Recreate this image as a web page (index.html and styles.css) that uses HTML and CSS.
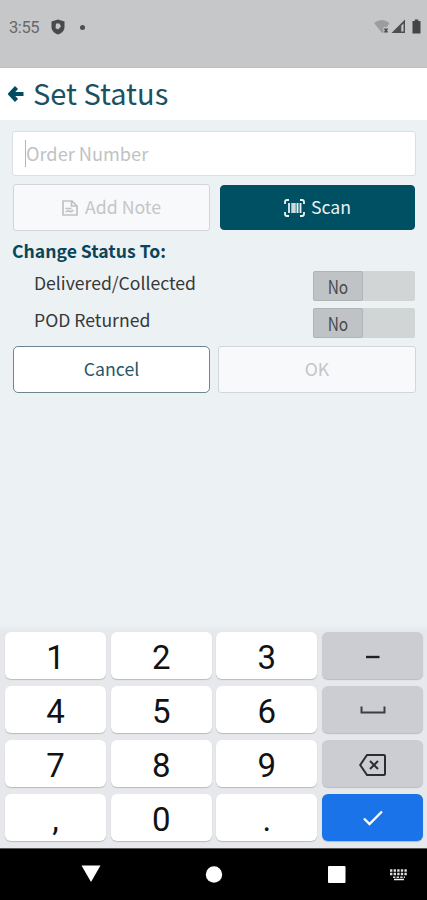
FILE: index.html
```html
<!DOCTYPE html>
<html lang="en">
<head>
<meta charset="utf-8">
<title>Set Status</title>
<link rel="stylesheet" href="styles.css">
</head>
<body>
<div class="statusbar">
  <span class="clock">3:55</span>
  <svg class="shield" width="14" height="16" viewBox="0 0 14 16"><path d="M7 .5 13.500 2.500V8c0 3.500-2.500 6-6.500 7.500C3 14 .5 11.500.5 8V2.500z" fill="#484a4c"/><path d="M5 4.500h3.500L10 7.500 7 10.500 4.500 9z" fill="#c5c7c9"/></svg>
  <span class="dot"></span>
  <span class="spacer"></span>
  <svg width="50" height="16" viewBox="0 0 50 16"><path d="M0 4Q8-2 15.500 4L13 8H9.500v5.500L8 14z" fill="#9b9d9f"/><path d="m10.500 9.500 3 4m0-4-3 4" stroke="#4c4e50" stroke-width="1.500"/><path d="M17.500 14 31 .5V14z" fill="#4c4e50"/><path d="M27.300 6.700 29.500 4.500v8h-2.200z" fill="#c5c7c9"/><path d="M38.500 2h2.300V.5h3.400V2h2.300v12.500h-8z" fill="#424446"/></svg>
</div>
<header class="header">
  <svg width="16" height="18" viewBox="0 0 16 18"><path d="M8.500 2.500 2.500 9l6 6.500M2.500 9H15.500" fill="none" stroke="#004d61" stroke-width="4.200"/></svg>
  <h1>Set Status</h1>
</header>
<main class="content">
  <div class="field"><span class="caret"></span><span class="placeholder">Order Number</span></div>
  <div class="buttons">
    <button class="btn disabled"><svg width="16" height="16" viewBox="0 0 16 16" fill="none" stroke="#bfc1c2" stroke-width="1.700"><path d="M1 1h9l5 5v9H1zM9.500 1v5H15M3.500 8.500h6M3.500 11.800l3-1 2 1 3-1.500"/></svg><span>Add Note</span></button>
    <button class="btn primary"><svg width="21" height="18" viewBox="0 0 21 18" fill="none" stroke="#e9f1f3" stroke-width="1.800"><path d="M5 1H3Q1 1 1 3v2M16 1h2q2 0 2 2v2M5 17H3q-2 0-2-2v-2M16 17h2q2 0 2-2v-2"/><path d="M5 4v10M16.500 4v10" stroke-width="1.800"/><path d="M9.500 4v10" stroke-width="4.500" stroke="#c9dade"/><path d="M13.500 4v10" stroke-width="2"/></svg><span>Scan</span></button>
  </div>
  <h2>Change Status To:</h2>
  <div class="option"><span class="label">Delivered/Collected</span><span class="toggle"><span class="knob"><span>No</span></span></span></div>
  <div class="option"><span class="label">POD Returned</span><span class="toggle"><span class="knob"><span>No</span></span></span></div>
  <div class="buttons actions">
    <button class="btn outline"><span>Cancel</span></button>
    <button class="btn disabled ok"><span>OK</span></button>
  </div>
</main>
<section class="keyboard">
  <div class="key">1</div><div class="key">2</div><div class="key">3</div>
  <div class="key fn"><svg width="28" height="24" viewBox="0 0 28 24"><path d="M7 12h13.500" stroke="#202124" stroke-width="2.400"/></svg></div>
  <div class="key">4</div><div class="key">5</div><div class="key">6</div>
  <div class="key fn"><svg width="28" height="24" viewBox="0 0 28 24"><path d="M2.500 7.500v6h23v-6" fill="none" stroke="#3c3d42" stroke-width="2"/></svg></div>
  <div class="key">7</div><div class="key">8</div><div class="key">9</div>
  <div class="key fn"><svg width="28" height="24" viewBox="0 0 28 24" fill="none" stroke="#2c2d31" stroke-width="2"><path d="M8 2H25q1 0 1 1v18q0 1-1 1H8L1.200 12z"/><path d="m11 8 8 8m0-8-8 8"/></svg></div>
  <div class="key">,</div><div class="key">0</div><div class="key">.</div>
  <div class="key go"><svg width="28" height="24" viewBox="0 0 28 24"><path d="m5 11.500 5.500 5.500L23 4.500" fill="none" stroke="#fff" stroke-width="2.300"/></svg></div>
</section>
<nav class="navbar">
  <svg width="427" height="52" viewBox="0 0 427 52" fill="#fff"><path d="M81.500 16.500h19L91 33z"/><circle cx="214" cy="25.500" r="8.200"/><rect x="328" y="17" width="17.500" height="17" rx="1"/><path d="M390 21.500h17M390 25h17" stroke="#ddd" stroke-width="2.500" stroke-dasharray="2.400 1.200"/><path d="M393 28.200h12" stroke="#ddd" stroke-width="1.500" stroke-dasharray="2.400 1.200"/><path d="M394 30.500h10" stroke="#eee" stroke-width="1.500"/></svg>
</nav>
</body>
</html>
```
FILE: styles.css
```css
* { box-sizing: border-box; }
body {
  margin: 0;
  width: 427px;
  height: 900px;
  display: flex;
  flex-direction: column;
  overflow: hidden;
  background: #ecf1f4;
  color: #36383a;
  font-family: "Noto Sans CJK SC", "Noto Sans", sans-serif;
}
svg { display: block; flex: none; }
.statusbar {
  flex: none;
  height: 68px;
  padding: 0 7px 13px 9px;
  display: flex;
  align-items: center;
  background: #c5c7c9;
  border-bottom: 1px solid #bdbfc0;
}
.clock { font: 16.5px/20px Roboto, sans-serif; letter-spacing: -0.4px; color: #66686a; width: 42px; padding-top: 2px; }
.dot { width: 5px; height: 5px; margin-left: 15px; border-radius: 50%; background: #4c4e50; }
.spacer { flex: 1; }
.statusbar svg:last-child { margin-right: -4px; }
.header {
  flex: none;
  height: 52px;
  padding-left: 8px;
  display: flex;
  align-items: center;
  gap: 9px;
  background: #fff;
}
h1 { margin: 0; padding-bottom: 5px; font-size: 29px; line-height: 40px; font-weight: 400; color: #1b5163; }
.content { flex: 1; padding: 11px 11px 0 12px; }
.field {
  height: 45px;
  padding-left: 12px;
  display: flex;
  align-items: center;
  background: #fff;
  border: 1px solid #dcdfe1;
  border-radius: 3px;
}
.caret { width: 1px; height: 27px; background: #b4b7b9; }
.placeholder { padding-bottom: 2px; font-size: 18.2px; line-height: 28px; color: #c0c2c4; }
.buttons { display: grid; grid-template-columns: 198px 198px; gap: 8px; margin-top: 8px; }
.btn {
  height: 47px;
  padding: 0;
  display: flex;
  align-items: center;
  justify-content: center;
  gap: 7px;
  border: 1px solid #d3d6d8;
  border-radius: 3px;
  font-family: inherit;
  font-size: 17.7px;
  line-height: 26px;
}
.btn > span { padding-bottom: 3px; }
.disabled { background: #f8f9fa; color: #c4c6c8; }
.primary {
  background: #005063;
  border-color: #005063;
  color: #e9f1f3;
  height: 45px;
  margin: 1px 1px 1px 2px;
  border-radius: 4px;
  gap: 6px;
}
.outline { background: #fff; border-color: #6d8590; color: #27566a; border-radius: 5px; }
.outline, .buttons > .disabled:first-child { margin-left: 1px; }
h2 { margin: 5px 0; font-size: 17.6px; line-height: 30px; font-weight: 700; color: #0b4559; }
.option { height: 37px; padding: 0 1px 0 22px; display: flex; justify-content: space-between; align-items: flex-start; }
.label { font-size: 17.6px; line-height: 24px; }
.toggle { width: 102px; height: 30px; background: #d2d5d6; border-radius: 2px; }
.knob {
  width: 50px;
  height: 30px;
  display: flex;
  align-items: center;
  justify-content: center;
  background: #c0c3c5;
  border: 1px solid #b1b4b6;
  border-radius: 2px;
  color: #484a4c;
  font-size: 18px;
  line-height: 26px;
}
.knob > span { transform: scaleX(0.86); }
.actions { margin-top: 1px; }
.actions .btn > span { padding-bottom: 4px; }
.keyboard {
  flex: none;
  height: 224px;
  padding: 8px 4px 0 5px;
  display: grid;
  grid-template-columns: repeat(4, 101px);
  grid-auto-rows: 48px;
  column-gap: 4.700px;
  row-gap: 6px;
  background: linear-gradient(#ecf1f4, #e6e8eb 9px);
}
.key {
  display: flex;
  align-items: center;
  justify-content: center;
  height: 47px;
  padding-top: 5px;
  background: #fff;
  border-radius: 6px;
  box-shadow: 0 1px 1px #b9bbbe;
  color: #111214;
  font: 33px/40px Roboto, sans-serif;
}
.fn, .go { padding-top: 3px; }
.fn { background: #cccdd3; }
.go { background: #1a73e8; }
.navbar { flex: none; height: 52px; background: #000; border-top: 1px solid #555; }
```
